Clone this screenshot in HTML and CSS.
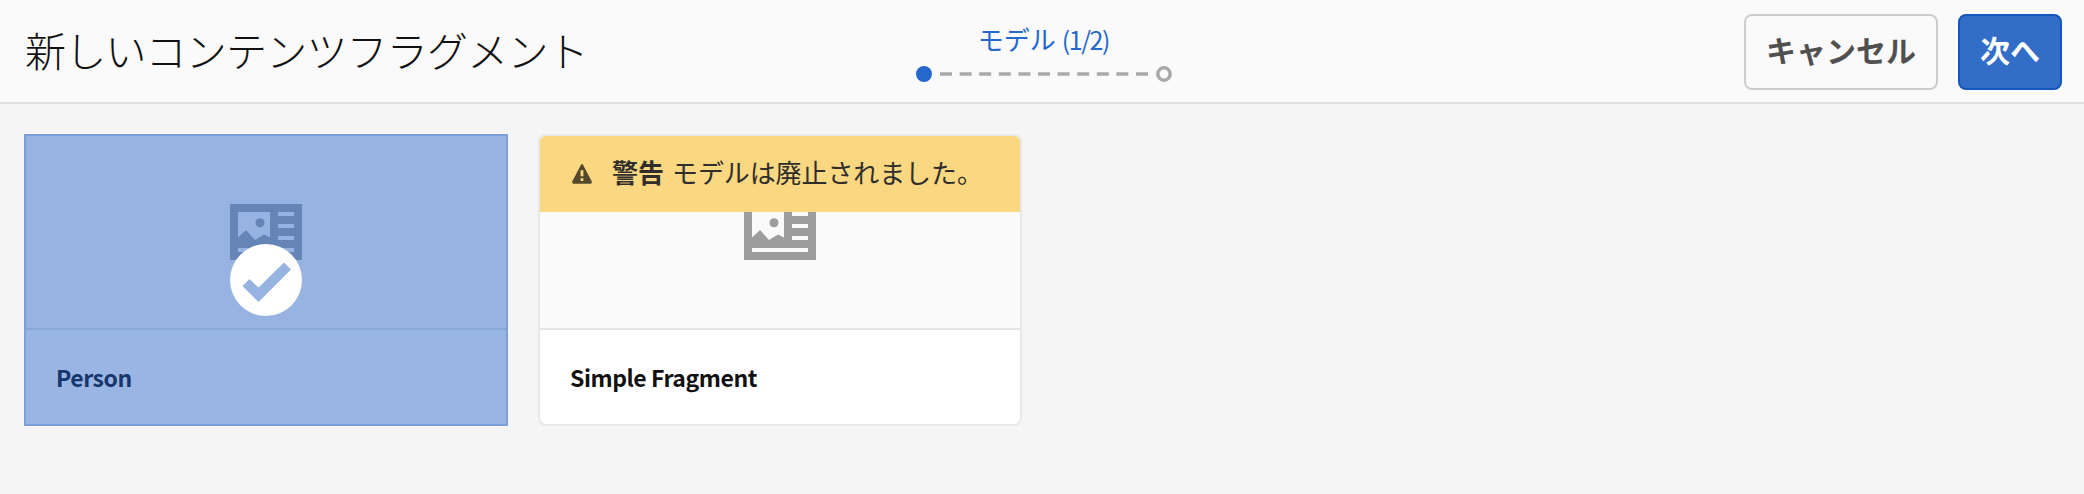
FILE: index.html
```html
<!DOCTYPE html>
<html lang="ja">
<head>
<meta charset="utf-8">
<title>新しいコンテンツフラグメント</title>
<link rel="stylesheet" href="styles.css">
</head>
<body>
<svg width="0" height="0" class="defs">
  <symbol id="model" viewBox="0 0 72 56">
    <path fill-rule="evenodd" d="M0 0H72V56H0ZM8 8V33.500L16 26L25 36L34 30.500L40 33.500V8ZM48 8V12H64V8ZM48 20V24H64V20ZM48 32V36H64V32ZM8 44V48H64V44Z"/>
    <circle cx="30" cy="18.700" r="4.500"/>
  </symbol>
</svg>
<header class="header">
  <h1 class="title"><span>新しいコンテンツフラグメント</span></h1>
  <div class="wizard">
    <div class="step-label"><span class="step-name">モデル</span> <span class="step-count">(1/2)</span></div>
    <svg class="steps" width="256" height="16" viewBox="0 0 256 16">
      <circle cx="8" cy="8" r="8" fill="#2468cb"/>
      <path d="M24 8H232" stroke="#a9a9a9" stroke-width="3.500" stroke-dasharray="12 7.600"/>
      <circle cx="248" cy="8" r="6.200" fill="none" stroke="#a9a9a9" stroke-width="3.500"/>
    </svg>
  </div>
  <div class="actions">
    <button class="button cancel"><span>キャンセル</span></button>
    <button class="button next"><span>次へ</span></button>
  </div>
</header>
<main class="cards">
  <article class="card selected">
    <div class="preview"><svg class="model-icon"><use href="#model"/></svg></div>
    <div class="name"><span>Person</span></div>
    <svg class="check" width="72" height="72" viewBox="0 0 72 72">
      <circle cx="36" cy="36" r="36" fill="#fff"/>
      <path d="M12.500 42L19.500 35L28.500 43.500L54 18.500L61 25.500L28.500 58Z" fill="#96b3e2"/>
    </svg>
  </article>
  <article class="card">
    <div class="preview"><svg class="model-icon"><use href="#model"/></svg></div>
    <div class="name"><span>Simple Fragment</span></div>
    <div class="alert">
      <svg class="alert-icon" width="20" height="20" viewBox="0 0 20 20">
        <path fill-rule="evenodd" d="M9 .8Q10-.6 11 .8L19.800 17.500Q20.300 19.600 18.500 19.700H1.500Q-.3 19.600 .2 17.500ZM8.600 6.300V12.300H11.400V6.300ZM8.600 14.300V17H11.400V14.300Z" fill="#544a2b"/>
      </svg>
      <strong class="alert-title">警告</strong>
      <span class="alert-text">モデルは廃止されました。</span>
    </div>
  </article>
</main>
</body>
</html>
```
FILE: styles.css
```css
* { box-sizing: border-box; }
body {
  margin: 0;
  height: 494px;
  overflow: hidden;
  background: #f5f5f5;
  color: #111;
  font-family: "Noto Sans CJK JP", sans-serif;
}
.defs { display: block; }
.header {
  display: grid;
  grid-template-columns: 1fr 256px 1fr;
  height: 104px;
  padding: 0 22px 0 25px;
  background: #fafafa;
  border-bottom: 2px solid #e0e0e0;
}
.title {
  margin: 0;
  font-size: 41px;
  font-weight: 300;
  line-height: 98px;
  white-space: nowrap;
  letter-spacing: -0.8px;
}
.wizard {
  display: flex;
  flex-direction: column;
  align-items: center;
  padding-top: 20px;
}
.step-label {
  height: 46px;
  line-height: 37px;
  font-size: 26px;
  color: #2468cb;
  white-space: nowrap;
}
.step-count {
  font-size: 25px;
  letter-spacing: -1.4px;
}
.steps { display: block; }
.actions {
  display: flex;
  justify-content: flex-end;
  gap: 20px;
  padding-top: 14px;
}
.button {
  height: 76px;
  padding: 0 0 6px;
  border-radius: 8px;
  font: 700 30px "Noto Sans CJK JP", sans-serif;
}
.cancel {
  width: 194px;
  color: #505050;
  background: transparent;
  border: 2px solid #cdcdcd;
}
.next {
  width: 104px;
  color: #fff;
  background: #326ec8;
  border: 2px solid #1556bd;
}
.cards {
  display: flex;
  gap: 30px;
  padding: 30px 24px;
}
.card {
  position: relative;
  width: 484px;
  height: 292px;
  border: 2px solid #e8e8e8;
  border-radius: 8px;
  background: #fff;
  overflow: hidden;
}
.preview {
  display: flex;
  justify-content: center;
  height: 194px;
  padding-top: 68px;
  background: #fafafa;
  border-bottom: 2px solid #e4e4e4;
}
.model-icon {
  width: 72px;
  height: 56px;
  fill: #9d9d9d;
}
.name {
  padding: 0 30px;
  line-height: 95px;
  font-size: 23px;
  font-weight: 700;
  letter-spacing: -0.45px;
}
.selected {
  border-color: #7ba0da;
  border-radius: 0;
  background: #98b5e4;
  color: #17366c;
}
.selected .preview {
  background: #96b3e2;
  border-color: #89a9da;
}
.selected .model-icon { fill: #6485b6; }
.check {
  position: absolute;
  left: 204px;
  top: 108px;
}
.alert {
  position: absolute;
  top: 0;
  left: 0;
  right: 0;
  display: flex;
  align-items: center;
  height: 76px;
  padding-left: 32px;
  background: #fad781;
  color: #302e2c;
  font-size: 26px;
  line-height: 36px;
  white-space: nowrap;
}
.alert-icon { margin-right: 20px; }
.alert-title {
  margin-right: 8px;
  padding-bottom: 4px;
}
.alert-text {
  padding-bottom: 4px;
  letter-spacing: -0.1px;
}
```
